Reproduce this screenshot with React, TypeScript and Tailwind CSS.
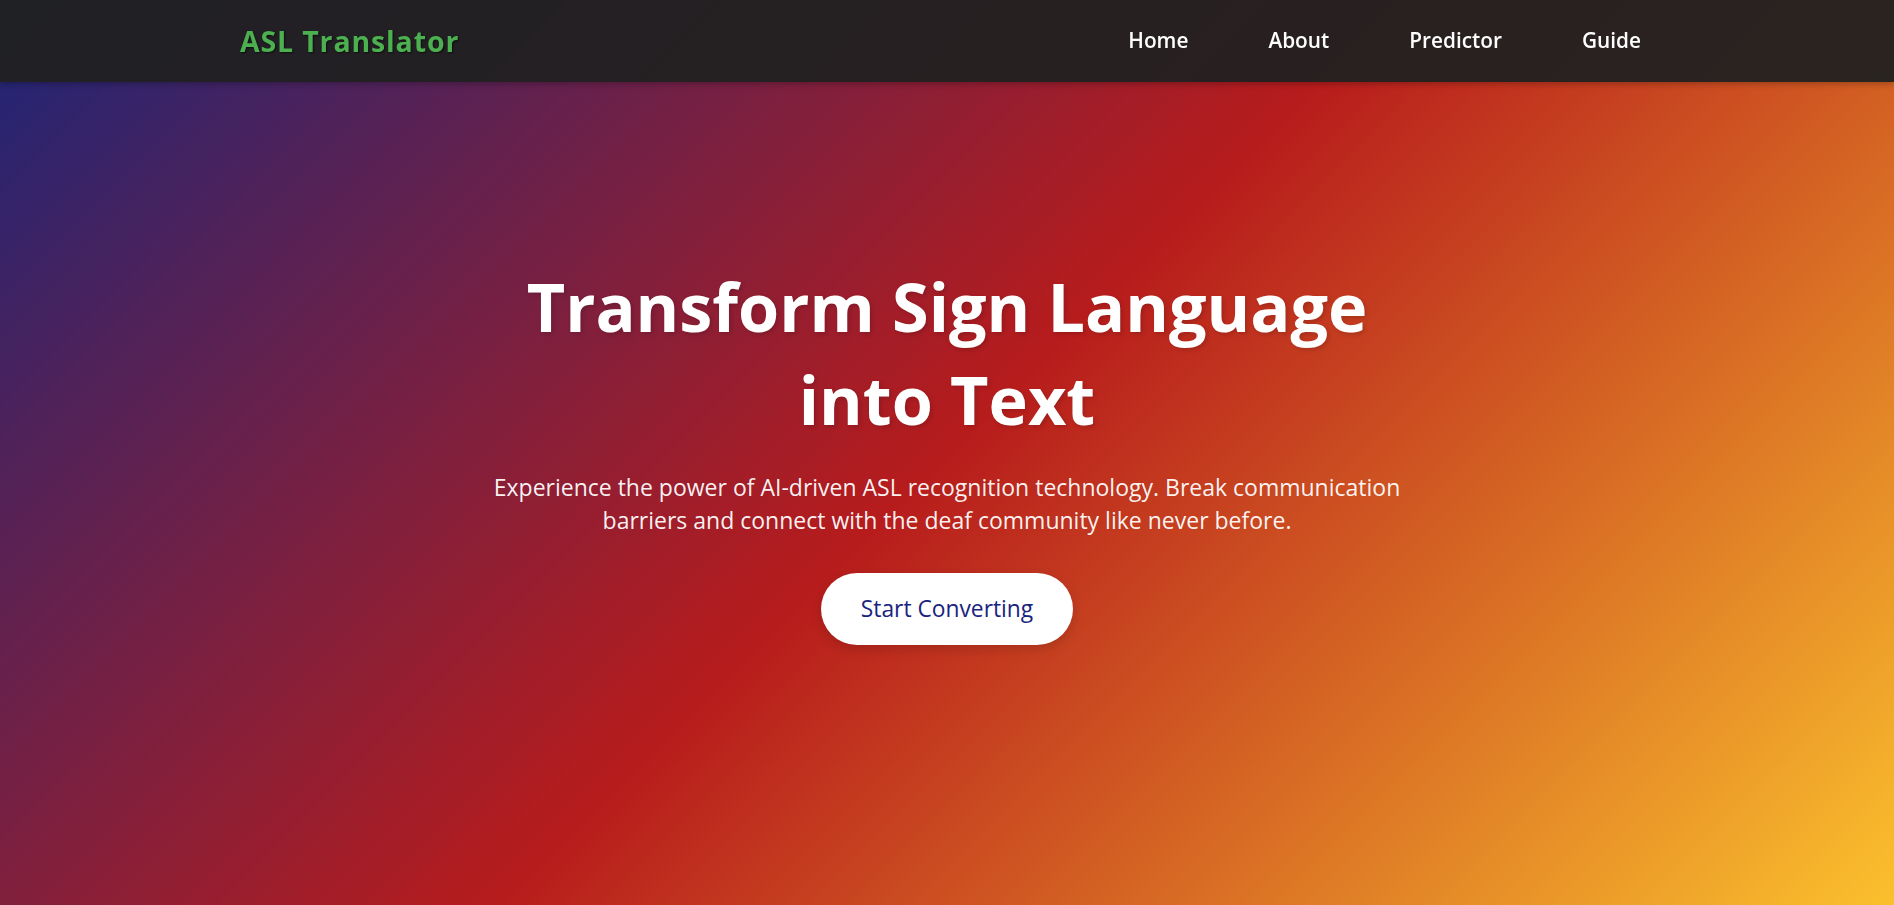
const links = ["Home", "About", "Predictor", "Guide"];

function Navbar() {
  return (
    <header className="fixed inset-x-0 top-0 z-20 bg-[rgba(33,33,33,0.95)] shadow-[0_2px_6px_rgba(0,0,0,0.25)]">
      <nav className="flex h-[82px] items-center justify-between pr-[237px] pl-[240px]">
        <a
          href="#"
          className="text-[28.5px] font-bold tracking-[0.85px] text-[#4caf50] [text-shadow:1px_1px_2px_rgba(0,0,0,0.6)]"
        >
          ASL Translator
        </a>
        <ul className="flex items-center gap-12">
          {links.map((label) => (
            <li key={label}>
              <a href="#" className="px-4 py-2 text-[20.8px] font-semibold text-white">
                {label}
              </a>
            </li>
          ))}
        </ul>
      </nav>
    </header>
  );
}

export default function App() {
  return (
    <div className="min-h-screen font-['Open_Sans',sans-serif] text-white">
      <Navbar />
      <main className="flex h-screen items-center justify-center bg-[linear-gradient(135deg,#1d2578_0%,#b71c1c_50%,#fbc02d_100%)] px-6 text-center">
        <div className="flex flex-col items-center">
          <h1 className="max-w-[900px] text-[66.5px] leading-[93px] font-bold [text-shadow:2px_2px_4px_rgba(0,0,0,0.15)]">
            Transform Sign Language into Text
          </h1>
          <p className="mt-[25px] max-w-[960px] text-[23px] leading-[33px] text-white/95">
            Experience the power of AI-driven ASL recognition technology. Break communication
            barriers and connect with the deaf community like never before.
          </p>
          <button className="mt-[36px] h-[72px] rounded-full bg-white px-10 text-[22.8px] text-[#1a237e] shadow-[0_4px_12px_rgba(0,0,0,0.15)]">
            Start Converting
          </button>
        </div>
      </main>
    </div>
  );
}
